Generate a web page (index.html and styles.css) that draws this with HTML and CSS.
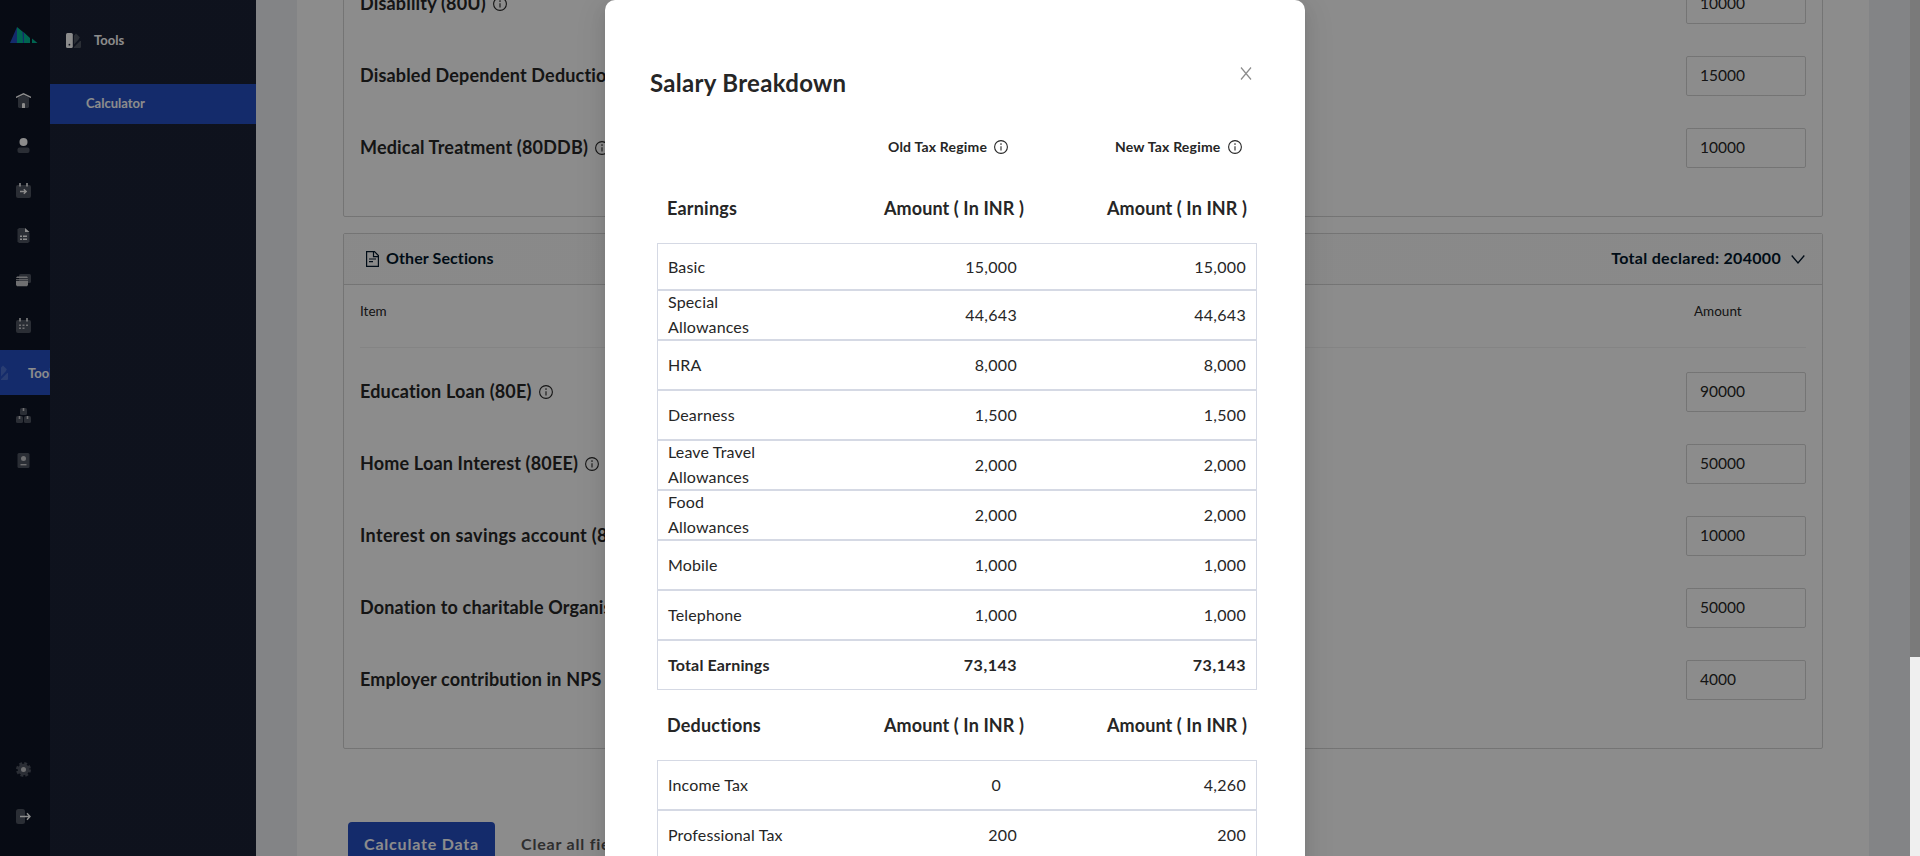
FILE: index.html
```html
<!DOCTYPE html>
<html lang="en">
<head>
<meta charset="utf-8">
<title>Salary Breakdown</title>
<link rel="stylesheet" href="styles.css">
</head>
<body>
<svg class="sprite" aria-hidden="true">
  <symbol id="info" viewBox="0 0 14 14"><circle cx="7" cy="7" r="6.4" fill="none" stroke="currentColor" stroke-width="1.1"/><path d="M7 6.2v4.2" stroke="currentColor" stroke-width="1.1"/><circle cx="7" cy="4.1" r=".8" fill="currentColor"/></symbol>
  <symbol id="swatch" viewBox="0 0 15 15"><path class="lo" d="M8 2.500l2-2 3.800 3.800-1 2L8 11.500z M14 8h1v6.200l-.8.8H8v-1z"/><rect class="hi" width="6.800" height="15" rx="1.500"/><circle cx="3.400" cy="11.700" r=".9" fill="#1a2135"/></symbol>
</svg>
<div class="app">
  <nav class="rail">
    <div class="rail-logo"><svg width="28" height="17" viewBox="0 0 28 17"><path fill="#244ec3" d="M0 17L7 1v16z"/><path fill="#00b894" d="M7 1l6 5v11H7z M14 6.500l6 5.500v5h-6z M22 12.500l5.500 4.500H22z"/><path fill="#244ec3" d="M12.500 5.500l1.500 1v10.500h-1z"/></svg></div>
    <div class="rail-item"><svg width="15" height="15" viewBox="0 0 15 15"><path class="lo" d="M2 4.500L7.500 2 13 4.500V14l-1 1H3l-1-1z"/><path d="M.5 4.200L7.500.8l7 3.400" fill="none" stroke="#fff" stroke-width="1.400" stroke-linecap="round"/><path class="hi" d="M6 15v-4q0-1 1.500-1T9 11v4z"/></svg></div>
    <div class="rail-item"><svg width="15" height="15" viewBox="0 0 15 15"><rect class="lo" x="1.500" y="9.500" width="12" height="5.500" rx="2"/><circle class="hi" cx="7.500" cy="4" r="4"/></svg></div>
    <div class="rail-item"><svg width="15" height="15" viewBox="0 0 15 15"><rect class="lo" y="2" width="15" height="13" rx="2"/><path d="M4 0v3.500M11 0v3.500" stroke="#fff" stroke-width="1.500"/><path d="M4 8.500h6M7.800 6.200l2.400 2.300-2.400 2.300" fill="none" stroke="#fff" stroke-width="1.400"/></svg></div>
    <div class="rail-item"><svg width="15" height="15" viewBox="0 0 15 15"><path class="lo" d="M3 0h5.500L13.500 5v8.500L12 15H3l-1.500-1.500v-12z"/><path class="hi" d="M9 0l4.500 4H9z M4 7.500h2V9H4z M7 7.500h4V9H7z M4 10.500h2V12H4z M7 10.500h4V12H7z"/></svg></div>
    <div class="rail-item"><svg width="15" height="15" viewBox="0 0 15 15"><rect class="lo" x="3" y="1" width="12" height="9" rx="1.500"/><path class="mid" d="M0 5l1-1.500h10L12 5z M0 6h12v.8H0z M0 7.700h12V12l-1 1.200H1L0 12z"/></svg></div>
    <div class="rail-item"><svg width="15" height="15" viewBox="0 0 15 15"><rect class="lo" y="2" width="15" height="13" rx="2"/><path d="M4 0v3.500M11 0v3.500" stroke="#fff" stroke-width="1.400"/><path class="mid" d="M3 6.500h2V8H3z M6.500 6.500h2V8h-2z M10 6.500h2V8h-2z M3 9.500h2V11H3z M6.500 9.500h2V11h-2z"/></svg></div>
    <div class="rail-item rail-active"><svg width="15" height="15" viewBox="0 0 15 15"><path class="tint" d="M8 2.500l2-2 3.800 3.800-1 2L8 11.500z M14.200 8h.8v6.200l-.8.8H8v-.800z"/></svg><span>Tools</span></div>
    <div class="rail-item"><svg width="15" height="15" viewBox="0 0 15 15"><rect class="lo" x="4" width="7" height="7" rx="1.500"/><rect class="lo" y="8" width="7" height="7" rx="1.500"/><rect class="lo" x="8" y="8" width="7" height="7" rx="1.500"/><path class="mid" d="M6.700 0h1.600v3H6.700z M2.700 8h1.600v3H2.700z M10.700 8h1.600v3h-1.600z"/></svg></div>
    <div class="rail-item"><svg width="15" height="15" viewBox="0 0 15 15"><rect class="lo" x="1.500" width="12" height="15" rx="1.500"/><circle class="mid" cx="7.500" cy="5.500" r="2.500"/><path class="mid" d="M4.500 11h6v1.400h-6z"/></svg></div>
    <div class="rail-foot">
      <div class="rail-item"><svg width="15" height="15" viewBox="0 0 15 15"><circle class="lo" cx="7.500" cy="7.500" r="5.800"/><circle cx="7.500" cy="7.500" r="6" fill="none" class="teeth"/><circle class="mid" cx="7.500" cy="7.500" r="2.500"/></svg></div>
      <div class="rail-item"><svg width="15" height="15" viewBox="0 0 15 15"><rect class="lo" width="9" height="15" rx="2.500"/><path d="M4 7.500h9.500M11 4.300l3 3.200-3 3.200" fill="none" stroke="#fff" stroke-width="1.400"/></svg></div>
    </div>
  </nav>
  <aside class="subnav">
    <div class="subnav-title"><svg width="15" height="15"><use href="#swatch"/></svg><span>Tools</span></div>
    <a class="subnav-link">Calculator</a>
  </aside>
  <main class="main">
    <div class="page">
      <section class="card card-first">
        <div class="field"><label>Disability (80U)<svg class="info"><use href="#info"/></svg></label><div class="input">10000</div></div>
        <div class="field"><label>Disabled Dependent Deduction (80DD)<svg class="info"><use href="#info"/></svg></label><div class="input">15000</div></div>
        <div class="field"><label>Medical Treatment (80DDB)<svg class="info"><use href="#info"/></svg></label><div class="input">10000</div></div>
      </section>
      <section class="card">
        <header class="card-head">
          <svg class="file" width="13" height="16" viewBox="0 0 13 16" fill="none" stroke="currentColor" stroke-width="1.200"><path d="M.6.600h7.900l3.900 4v10.800H.600z"/><path d="M7.500 1v4.600H12M3 8h7M3 10.700h4"/></svg>
          <span>Other Sections</span>
          <span class="declared">Total declared: 204000</span>
          <svg class="chevron" width="14" height="9" viewBox="0 0 14 9" fill="none" stroke="currentColor" stroke-width="1.300"><path d="M.7.500L7 8 13.300.500"/></svg>
        </header>
        <div class="columns"><span>Item</span><span class="col-amount">Amount</span></div>
        <div class="field"><label>Education Loan (80E)<svg class="info"><use href="#info"/></svg></label><div class="input">90000</div></div>
        <div class="field"><label>Home Loan Interest (80EE)<svg class="info"><use href="#info"/></svg></label><div class="input">50000</div></div>
        <div class="field"><label class="wide">Interest on savings account (80TTA)</label><div class="input">10000</div></div>
        <div class="field"><label>Donation to charitable Organisation</label><div class="input">50000</div></div>
        <div class="field"><label>Employer contribution in NPS</label><div class="input">4000</div></div>
      </section>
      <div class="actions"><button class="btn primary">Calculate Data</button><button class="btn">Clear all fields</button></div>
    </div>
  </main>
  <div class="scroll"><div class="thumb"></div></div>
</div>

<div class="overlay">
  <div class="modal">
    <div class="modal-head"><h1>Salary Breakdown</h1><svg class="close" width="12" height="13" viewBox="0 0 12 13" fill="none" stroke="#8c8c8c" stroke-width="1.200"><path d="M1 .5l10 12M11 .5L1 12.500"/></svg></div>
    <div class="regimes">
      <div class="regime old">Old Tax Regime<svg class="info"><use href="#info"/></svg></div>
      <div class="regime new">New Tax Regime<svg class="info"><use href="#info"/></svg></div>
    </div>
    <div class="heading"><span>Earnings</span><span>Amount ( In INR )</span><span>Amount ( In INR )</span></div>
    <div class="table">
      <div class="row row-first"><span>Basic</span><span>15,000</span><span>15,000</span></div>
      <div class="row"><span>Special Allowances</span><span>44,643</span><span>44,643</span></div>
      <div class="row"><span>HRA</span><span>8,000</span><span>8,000</span></div>
      <div class="row"><span>Dearness</span><span>1,500</span><span>1,500</span></div>
      <div class="row"><span>Leave Travel Allowances</span><span>2,000</span><span>2,000</span></div>
      <div class="row"><span>Food Allowances</span><span>2,000</span><span>2,000</span></div>
      <div class="row"><span>Mobile</span><span>1,000</span><span>1,000</span></div>
      <div class="row"><span>Telephone</span><span>1,000</span><span>1,000</span></div>
      <div class="row total"><span>Total Earnings</span><span>73,143</span><span>73,143</span></div>
    </div>
    <div class="heading"><span>Deductions</span><span>Amount ( In INR )</span><span>Amount ( In INR )</span></div>
    <div class="table">
      <div class="row"><span>Income Tax</span><span class="nil">0</span><span>4,260</span></div>
      <div class="row"><span>Professional Tax</span><span>200</span><span>200</span></div>
    </div>
  </div>
</div>
</body>
</html>
```
FILE: styles.css
```css
* { box-sizing: border-box; }
body { margin: 0; height: 856px; overflow: hidden; font-family: Lato, "Open Sans", sans-serif; color: #262626; }
svg { flex: none; display: block; }
.sprite { position: absolute; width: 0; height: 0; }
.lo { fill: #4d5360; }
.mid { fill: #c9cacd; }
.hi { fill: #fff; }
.tint { fill: #4a6fd0; }
.teeth { stroke: #4d5360; stroke-width: 3; stroke-dasharray: 2.700 2.010; }
.info { width: 14px; height: 14px; }

.app { display: flex; height: 856px; }
.rail { width: 50px; background: #0d1424; display: flex; flex-direction: column; overflow: hidden; }
.rail-logo { height: 78px; padding: 26px 0 0 10px; }
.rail-item { flex: none; height: 45px; padding-left: 16px; display: flex; align-items: center; }
.rail-active { background: #244ec3; padding-left: 0; margin: 2px 0 -2px -7px; gap: 20px; color: #fff; font-size: 13px; font-weight: 700; }
.rail-foot { margin-top: auto; padding-bottom: 17px; display: flex; flex-direction: column; gap: 2px; }
.subnav { width: 206px; background: #1a2135; color: #fff; font-size: 13px; font-weight: 700; }
.subnav-title { height: 84px; padding: 33px 0 0 16px; display: flex; gap: 13px; line-height: 14px; }
.subnav-link { display: block; height: 40px; line-height: 39px; padding-left: 36px; background: #244ec3; }

.main { flex: 1; background: #eef0f4; padding: 0 41px; height: 856px; overflow: hidden; }
.page { display: flow-root; background: #fff; height: 856px; padding: 0 46px; }
.card { border: 1px solid #d4d4d4; border-radius: 2px; padding-bottom: 32px; margin-bottom: 16px; }
.card-first { margin-top: -33px; }
.card-head { height: 51px; display: flex; align-items: center; padding: 0 17px 0 22px; background: #fafafa; border-bottom: 1px solid #d4d4d4; color: #001529; font-size: 16px; line-height: 20px; font-weight: 700; letter-spacing: .1px; }
.card-head span { margin-bottom: 2px; }
.file { margin-right: 7px; }
.card-head .declared { margin-left: auto; letter-spacing: .3px; }
.chevron { margin-left: 10px; }
.columns { margin: 0 16px 8px; height: 63px; padding: 16px 0 0; border-bottom: 1px solid #f0f0f0; display: flex; justify-content: space-between; font-size: 13.500px; line-height: 21px; }
.col-amount { width: 112px; }
.field { height: 72px; padding: 0 16px; display: flex; align-items: center; justify-content: space-between; }
.field label { display: flex; align-items: center; gap: 7px; margin-bottom: 2px; font-size: 18px; font-weight: 700; letter-spacing: .17px; }
.field label.wide { letter-spacing: .35px; }
.field .info { margin-top: 2px; }
.input { width: 120px; height: 40px; border: 1px solid #d4d4d4; border-radius: 2px; padding-left: 13px; font-size: 15.500px; line-height: 36px; }
.actions { padding: 57px 0 0 5px; display: flex; gap: 10px; }
.btn { height: 42px; border: 0; border-radius: 4px; padding: 0 16px; background: none; font: 700 16px/41px Lato, sans-serif; letter-spacing: .8px; color: #555; }
.primary { background: #244ec3; color: #fff; width: 147px; padding: 0; }
.scroll { width: 10px; background: #dedede; padding-top: 657px; }
.thumb { height: 199px; background: #efefef; }

.overlay { position: absolute; inset: 0; overflow: hidden; padding-right: 10px; display: flex; justify-content: center; background: linear-gradient(#00000073, #00000073) left top / 1910px 100% no-repeat, linear-gradient(#7a7a7a, #7a7a7a) right top / 10px 657px no-repeat; }
.modal { width: 700px; height: 1100px; padding: 0 48px 0 52px; background: #fff; border-radius: 10px; box-shadow: 0 3px 6px -4px rgba(0,0,0,.12), 0 6px 16px rgba(0,0,0,.08), 0 9px 28px 8px rgba(0,0,0,.05); }
.modal-head { height: 122px; padding: 44px 5px 0 0; margin-left: -7px; display: flex; align-items: center; justify-content: space-between; }
h1 { margin: 0; font-size: 24px; line-height: 32px; font-weight: 700; letter-spacing: .3px; }
.close { margin-bottom: 19px; }
.regimes { height: 51px; display: flex; align-items: center; padding-left: 231px; font-size: 14px; line-height: 18px; font-weight: 700; letter-spacing: .2px; }
.regime { display: flex; align-items: center; gap: 7px; margin-bottom: 1px; }
.old { width: 227px; }
.heading { height: 70px; display: grid; grid-template-columns: 140px 217px 223px; padding-left: 10px; align-items: center; font-size: 18px; font-weight: 700; letter-spacing: .1px; }
.heading span:first-child { letter-spacing: .2px; }
.heading span + span, .row span + span { text-align: right; }
.row { height: 50px; border: 1px solid #d5d9e4; padding-left: 10px; display: grid; grid-template-columns: 120px 229px 229px; align-items: center; font-size: 16px; line-height: 25px; letter-spacing: .15px; }
.row span { margin: -2px 0 0; }
.row span:first-child { margin: -3px 0 -1px; }
.row span + span { letter-spacing: .3px; }
.row-first { height: 47px; }
.row-first span, .row-first span:first-child { margin: -1px 0 0; }
.total { font-weight: 700; }
.total span + span { letter-spacing: .5px; }
.row .nil { padding-right: 16px; }
```
